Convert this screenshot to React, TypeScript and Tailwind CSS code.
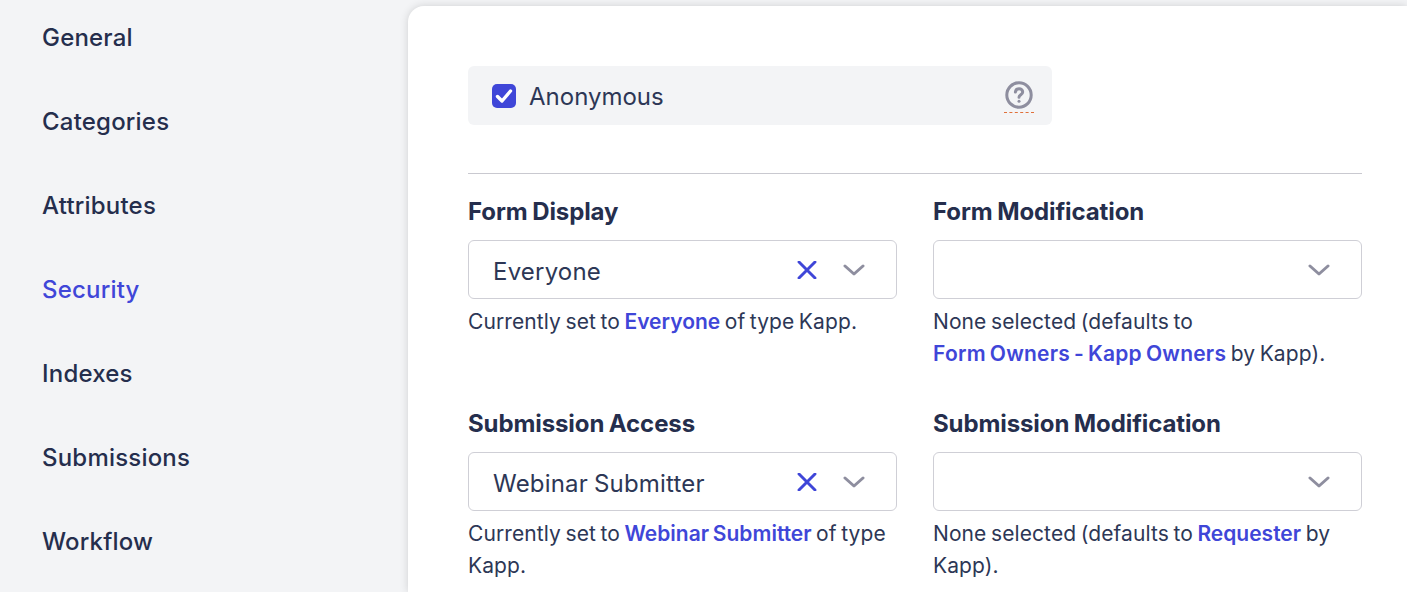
import React from "react";

function Chevron() {
  return (
    <svg width="22" height="12" viewBox="0 0 22 12" fill="none" stroke="#8e8e9f" strokeWidth="3" strokeLinecap="round" strokeLinejoin="round">
      <path d="M2 2l9 8 9-8" />
    </svg>
  );
}

function Clear() {
  return (
    <svg width="20" height="18" viewBox="0 0 20 18" fill="none" stroke="#3f46d8" strokeWidth="2.9" strokeLinecap="round">
      <path d="M2 1l16 16M18 1L2 17" />
    </svg>
  );
}

function Select({ value }: { value?: string }) {
  return (
    <div className="flex h-[59px] items-center rounded-md border border-[#cfcfd6] bg-white pl-6 pr-[31px]">
      <span className="mt-[4px] flex-1 text-2xl leading-[32px] text-[#2d3756] [word-spacing:-1px] tracking-[0.2px]">{value}</span>
      {value ? <span className="mr-[26px] flex"><Clear /></span> : null}
      <Chevron />
    </div>
  );
}

function L({ children, wide }: { children: React.ReactNode; wide?: boolean }) {
  return <span className={"font-semibold text-[#3f46d8] " + (wide ? "tracking-[0.22px]" : "tracking-[0px]")}>{children}</span>;
}

function Field({ label, value, children }: { label: string; value?: string; children: React.ReactNode }) {
  return (
    <div className="flex flex-col">
      <div className="mb-[12px] text-2xl leading-[32px] font-bold tracking-[-0.1px] [word-spacing:-1px] text-[#252e4d]">{label}</div>
      <Select value={value} />
      <div className="mt-[7px] text-[21px] leading-[32px] tracking-[0.1px] [word-spacing:-1.5px] text-[#2d3756]">{children}</div>
    </div>
  );
}

export default function App() {
  const nav = ["General", "Categories", "Attributes", "Security", "Indexes", "Submissions", "Workflow"];
  return (
    <div className="flex h-[592px] w-[1407px] overflow-hidden bg-[#f3f4f6] font-['Inter',sans-serif]">
      <nav className="flex w-[408px] shrink-0 flex-col gap-[52px] pt-[22px] pl-[42px]">
        {nav.map((n) => (
          <div key={n} className={"text-2xl leading-[32px] font-medium tracking-[0.2px] " + (n === "Security" ? "text-[#3f46d8]" : "text-[#252e4d]")}>{n}</div>
        ))}
      </nav>
      <main className="mt-[6px] min-w-0 flex-1 rounded-tl-2xl bg-white pt-[60px] pl-[60px] pr-[45px] shadow-[0_0_8px_rgba(0,0,0,0.15)]">
        <div className="flex h-[59px] w-[584px] items-center rounded-md bg-[#f3f4f6] pl-6 pr-[18px]">
          <span className="flex h-6 w-6 items-center justify-center rounded-[5px] bg-[#3f46d8]">
            <svg width="18" height="16" viewBox="0 0 18 16" fill="none" stroke="#fff" strokeWidth="3.4" strokeLinecap="round" strokeLinejoin="round">
              <path d="M2.500 8.500l4.500 4.500 8.500-10" />
            </svg>
          </span>
          <span className="ml-[13px] mt-[2px] flex-1 text-2xl text-[#2d3756]">Anonymous</span>
          <span className="mt-[1px] flex h-[34px] w-[30px] items-start justify-center border-b border-dashed border-[#e0703a] pt-[2px]">
            <svg width="28" height="28" viewBox="0 0 28 28" fill="none" stroke="#8e8e9f" strokeWidth="3" strokeLinecap="round">
              <circle cx="14" cy="14" r="12.200" />
              <path d="M10.400 11c.3-2 1.800-3.200 3.700-3.200 2 0 3.600 1.300 3.600 3.100 0 2.700-3.700 2.800-3.700 5.300" />
              <path d="M14 20.200v.1" />
            </svg>
          </span>
        </div>
        <hr className="mt-12 border-0 border-t border-[#c9c9d0]" />
        <div className="mt-[22px] grid grid-cols-2 gap-x-9 gap-y-[38px]">
          <Field label="Form Display" value="Everyone">
            Currently set to <L>Everyone</L> of type Kapp.
          </Field>
          <Field label="Form Modification">
            None selected (defaults to<br />
            <L wide>Form Owners - Kapp Owners</L> by Kapp).
          </Field>
          <Field label="Submission Access" value="Webinar Submitter">
            Currently set to <L>Webinar Submitter</L> of type Kapp.
          </Field>
          <Field label="Submission Modification">
            None selected (defaults to <L>Requester</L> by Kapp).
          </Field>
        </div>
      </main>
    </div>
  );
}
